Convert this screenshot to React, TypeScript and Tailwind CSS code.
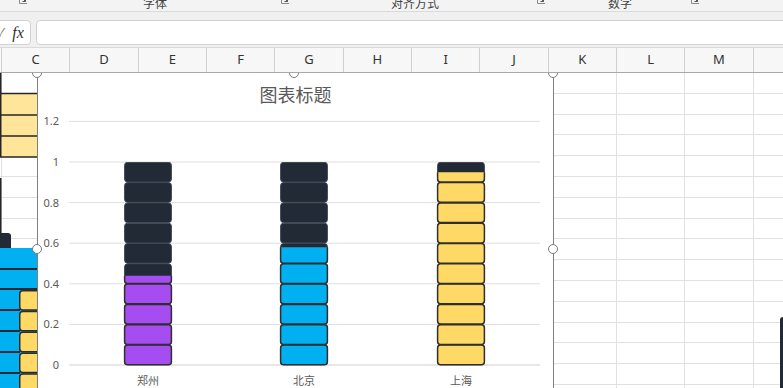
import React from "react";

const COLS = ["C", "D", "E", "F", "G", "H", "I", "J", "K", "L", "M", ""];
const ROWS = Array.from({ length: 16 }, (_, i) => i);

const UNIT = 20.3;
const Y = (v: number) => 252 - v * 203;

const TICKS = [
  { v: 0, t: "0" },
  { v: 0.2, t: "0.2" },
  { v: 0.4, t: "0.4" },
  { v: 0.6, t: "0.6" },
  { v: 0.8, t: "0.8" },
  { v: 1, t: "1" },
  { v: 1.2, t: "1.2" },
];

const BARS = [
  { name: "郑州", x: 86, value: 0.44, color: "#a64df2" },
  { name: "北京", x: 242, value: 0.58, color: "#00b0f0" },
  { name: "上海", x: 399, value: 0.95, color: "#ffd966" },
];

const Launcher = () => (
  <svg width="10" height="12" viewBox="0 0 10 12" className="block">
    <path d="M1.5 0v7.5h7.5" fill="none" stroke="#8a8a8a" strokeWidth="1" />
    <path d="M3.5 1.5l4 4M7.5 2.5v3h-3" fill="none" stroke="#555" strokeWidth="1" />
  </svg>
);

const Tiles = ({
  x,
  value,
  fill,
  stroke,
  width,
  id,
}: {
  x: number;
  value: number;
  fill: string;
  stroke: string;
  width: number;
  id: string;
}) => {
  const n = Math.ceil(value * 10 - 0.0001);
  return (
    <g clipPath={`url(#${id})`}>
      <clipPath id={id}>
        <rect x={x - 2} y={Y(value)} width={52} height={Y(0) - Y(value) + 2} />
      </clipPath>
      {Array.from({ length: n }, (_, i) => (
        <rect
          key={i}
          x={x + 0.6}
          y={Y((i + 1) / 10) + 0.3}
          width={46.8}
          height={UNIT - 0.6}
          rx={3}
          fill={fill}
          stroke={stroke}
          strokeWidth={width}
        />
      ))}
    </g>
  );
};

const Handle = ({ className }: { className: string }) => (
  <div className={`absolute w-[10px] h-[10px] rounded-full bg-white border-[1.5px] border-[#7a7a7a] ${className}`} />
);

export default function App() {
  return (
    <div className="w-[783px] h-[388px] overflow-hidden bg-white flex flex-col font-['Noto_Sans','Noto_Sans_CJK_SC',sans-serif]">
      {/* ribbon group labels, cut off at the top */}
      <div className="h-[12px] flex-none flex bg-[#f3f3f3] border-b border-[#dadada] overflow-hidden text-[12px] leading-[12px] text-[#444]">
        <div className="w-[30px] flex justify-end items-start pr-[2px] -mt-[4px]">
          <Launcher />
        </div>
        <div className="w-[264px] flex items-start">
          <span className="flex-1 text-center -mt-[3px] font-['Noto_Sans_CJK_SC',sans-serif]">字体</span>
          <div className="-mt-[4px] pr-[4px]">
            <Launcher />
          </div>
        </div>
        <div className="w-[256px] flex items-start">
          <span className="flex-1 text-center -mt-[3px] font-['Noto_Sans_CJK_SC',sans-serif]">对齐方式</span>
          <div className="-mt-[4px] pr-[4px]">
            <Launcher />
          </div>
        </div>
        <div className="w-[154px] flex items-start">
          <span className="flex-1 text-center -mt-[3px] font-['Noto_Sans_CJK_SC',sans-serif]">数字</span>
          <div className="-mt-[4px] pr-[4px]">
            <Launcher />
          </div>
        </div>
      </div>

      {/* formula bar */}
      <div className="h-[35px] flex-none bg-[#f0f0f0] flex items-start pt-[8px] gap-[5px] overflow-hidden">
        <div className="-ml-[10px] w-[41px] h-[25px] flex-none bg-white border border-[#d2d2d2] rounded-[4px] flex items-center gap-[7px] pl-[6px]">
          <span className="text-[12px] text-[#888]">✓</span>
          <span className="text-[16px] italic text-[#333] font-['Liberation_Serif',serif]">fx</span>
        </div>
        <div className="flex-1 h-[25px] -mr-[10px] bg-white border border-[#d2d2d2] rounded-[4px]" />
      </div>

      {/* column headers */}
      <div className="h-[26px] flex-none flex bg-[#f7f7f7] border-t border-[#d9d9d9] border-b border-b-[#a8a8a8] text-[13px] text-[#333]">
        <div className="w-[2px] flex-none border-r border-[#d0d0d0]" />
        {COLS.map((c, i) => (
          <div key={i} className="w-[68.33px] flex-none border-r border-[#d0d0d0] flex items-center justify-center">
            {c}
          </div>
        ))}
      </div>

      {/* sheet */}
      <div className="relative h-[315px] flex-none overflow-hidden">
        <div className="flex flex-col">
          {ROWS.map((r) => (
            <div key={r} className="h-[20.8px] flex-none flex border-b border-[#e1e1e1]">
              <div className="w-[2px] flex-none border-r border-[#e1e1e1]" />
              {COLS.map((_, i) => (
                <div key={i} className="w-[68.33px] flex-none border-r border-[#e1e1e1]" />
              ))}
            </div>
          ))}
        </div>

        {/* chart partly hidden at the left */}
        <svg className="absolute left-0 top-0" width="38" height="315">
          <rect x="0" y="20" width="38" height="64" fill="#fee599" />
          <path d="M0 20.5H38M0 42H38M0 63H38M0 84H38" stroke="#262626" strokeWidth="1.5" />
          <path d="M0.75 0V84M0.75 105V163" stroke="#262626" strokeWidth="1.5" />
          <rect x="-4" y="160" width="15" height="20" rx="3" fill="#222a35" />
          <rect x="0" y="175" width="38" height="140" fill="#00b0f0" />
          <path d="M0 196H38M0 216H38M0 237H20M0 258H20M0 279H20M0 300H20" stroke="#1f2a36" strokeWidth="2" />
          {[217, 237.8, 258.6, 279.4, 300.2].map((y) => (
            <rect key={y} x="19.75" y={y + 0.75} width="24" height="19.3" rx="3" fill="#ffd966" stroke="#2d2d2d" strokeWidth="1.5" />
          ))}
        </svg>

        {/* selected chart */}
        <div className="absolute left-[37px] top-0 w-[517px] h-[315px] bg-white border-l border-r border-[#7f7f7f] flex flex-col">
          <div className="h-[40px] flex-none pt-[9px] text-center text-[18px] leading-[24px] text-[#595959] font-['Noto_Sans_CJK_SC',sans-serif]">
            图表标题
          </div>
          <svg width="515" height="275" className="block flex-none">
            {TICKS.map((t) => (
              <g key={t.t}>
                <line x1="31" x2="502" y1={Y(t.v)} y2={Y(t.v)} stroke={t.v === 0 ? "#cfcfcf" : "#dedede"} strokeWidth="1" />
                <text x="21" y={Y(t.v) + 4} textAnchor="end" fontSize="11" fill="#595959" fontFamily="Noto Sans, sans-serif">
                  {t.t}
                </text>
              </g>
            ))}
            {BARS.map((b, i) => (
              <g key={b.name}>
                <Tiles x={b.x} value={1} fill="#222a35" stroke="#3d4554" width={1} id={`d${i}`} />
                <Tiles x={b.x} value={b.value} fill={b.color} stroke="#2f2f2f" width={1.5} id={`f${i}`} />
                <text x={b.x + 24} y="272" textAnchor="middle" fontSize="11" fill="#595959" fontFamily="Noto Sans CJK SC, sans-serif">
                  {b.name}
                </text>
              </g>
            ))}
          </svg>
        </div>

        <Handle className="left-[32px] -top-[5px]" />
        <Handle className="left-[289px] -top-[5px]" />
        <Handle className="left-[548px] -top-[5px]" />
        <Handle className="left-[32px] top-[171px]" />
        <Handle className="left-[548px] top-[171px]" />

        {/* edge of another chart at the right */}
        <div className="absolute left-[780px] top-[244px] w-[6px] h-[80px] bg-[#222a35] rounded-tl-[3px]" />
      </div>
    </div>
  );
}
